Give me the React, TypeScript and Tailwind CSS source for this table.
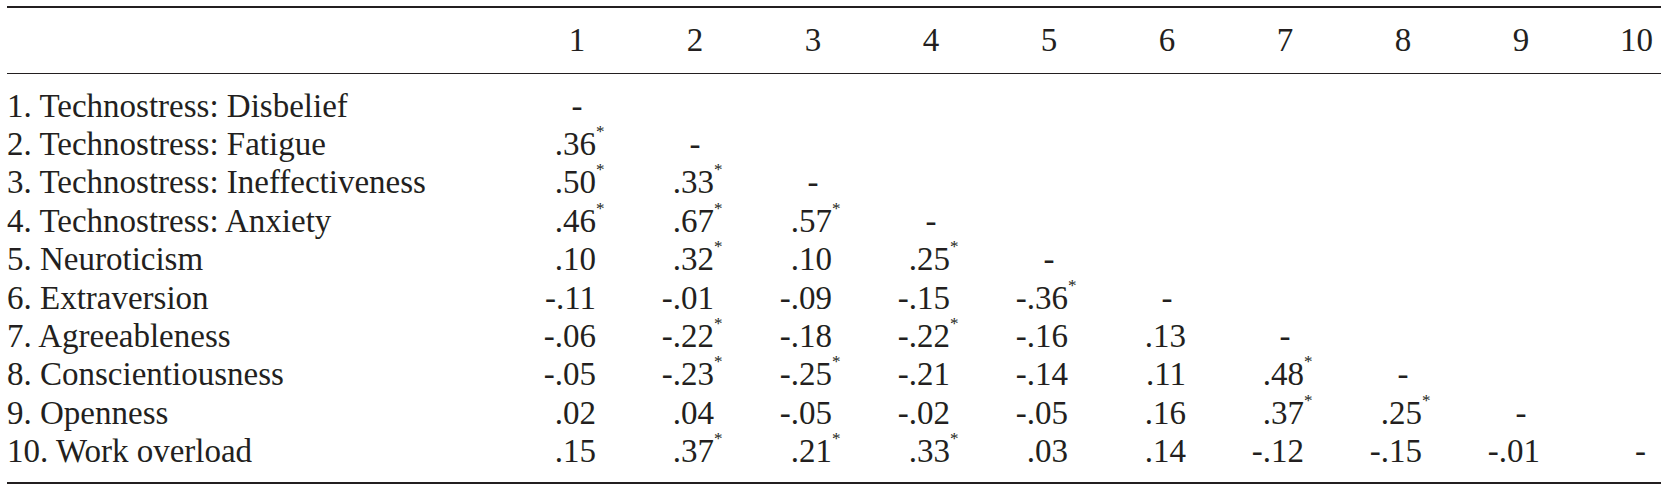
const rows: { label: string; vals: string[] }[] = [
  { label: "1. Technostress: Disbelief", vals: ["-"] },
  { label: "2. Technostress: Fatigue", vals: [".36*", "-"] },
  { label: "3. Technostress: Ineffectiveness", vals: [".50*", ".33*", "-"] },
  { label: "4. Technostress: Anxiety", vals: [".46*", ".67*", ".57*", "-"] },
  { label: "5. Neuroticism", vals: [".10", ".32*", ".10", ".25*", "-"] },
  { label: "6. Extraversion", vals: ["-.11", "-.01", "-.09", "-.15", "-.36*", "-"] },
  { label: "7. Agreeableness", vals: ["-.06", "-.22*", "-.18", "-.22*", "-.16", ".13", "-"] },
  { label: "8. Conscientiousness", vals: ["-.05", "-.23*", "-.25*", "-.21", "-.14", ".11", ".48*", "-"] },
  { label: "9. Openness", vals: [".02", ".04", "-.05", "-.02", "-.05", ".16", ".37*", ".25*", "-"] },
  { label: "10. Work overload", vals: [".15", ".37*", ".21*", ".33*", ".03", ".14", "-.12", "-.15", "-.01", "-"] },
];

const cols = [1, 2, 3, 4, 5, 6, 7, 8, 9, 10];

function Cell({ v, last }: { v?: string; last: boolean }) {
  if (!v) return <div />;
  if (v === "-") {
    return <div className={last ? "text-right pr-[15px]" : "text-center"}>-</div>;
  }
  const star = v.endsWith("*");
  const num = star ? v.slice(0, -1) : v;
  return (
    <div className="text-right pr-[40px]">
      <span className="relative">
        {num}
        {star && <span className="absolute left-full top-[-3px] text-[17px] leading-none">*</span>}
      </span>
    </div>
  );
}

export default function App() {
  return (
    <div className="w-[1667px] h-[491px] bg-white pt-[6px] text-[#231f20] [font-family:'Liberation_Serif','Times_New_Roman',serif] text-[33px] leading-none">
      <div className="ml-[7px] w-[1654px] border-t-2 border-b-2 border-[#231f20]">

        {/* HEADER */}
        <div className="grid grid-cols-[511px_repeat(9,118px)_1fr] items-center h-[66px] border-b border-[#231f20]">
          <div />
          {cols.map((c) => (
            <div key={c} className={c === 10 ? "text-right pr-[8px]" : "text-center"}>
              {c}
            </div>
          ))}
        </div>

        {/* BODY */}
        <div className="pt-[13px] pb-[11px]">
          {rows.map((r) => (
            <div key={r.label} className="grid grid-cols-[511px_repeat(9,118px)_1fr] items-center h-[38.4px]">
              <div>{r.label}</div>
              {cols.map((c, i) => (
                <Cell key={c} v={r.vals[i]} last={c === 10} />
              ))}
            </div>
          ))}
        </div>

      </div>
    </div>
  );
}
